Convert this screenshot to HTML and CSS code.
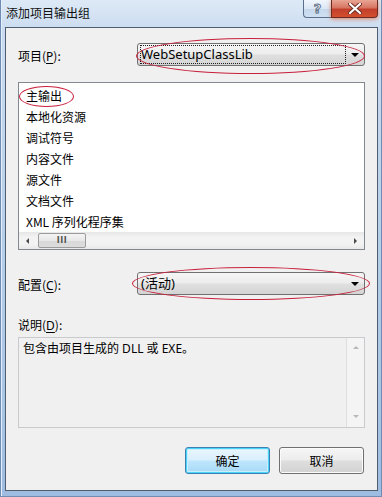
FILE: index.html
```html
<!DOCTYPE html>
<html lang="zh-CN">
<head>
<meta charset="utf-8">
<title>添加项目输出组</title>
<link rel="stylesheet" href="styles.css">
</head>
<body>
<div class="window">
  <div class="titlebar">
    <span class="title">添加项目输出组</span>
    <div class="caption-buttons">
      <div class="cap-btn help"><span class="help-glyph">?</span></div>
      <div class="cap-btn close">
        <svg width="14" height="11" viewBox="0 0 14 11"><path d="M2 1 L12 10 M12 1 L2 10" stroke="#6b2a22" stroke-width="4" stroke-linecap="round"/><path d="M2 1 L12 10 M12 1 L2 10" stroke="#ffffff" stroke-width="2.2" stroke-linecap="round"/></svg>
      </div>
    </div>
  </div>
  <div class="client">
    <div class="field-row row-project">
      <span class="field-label">项目(<u>P</u>):</span>
      <div class="combo">
        <span class="combo-text focus-rect">WebSetupClassLib</span>
        <span class="combo-arrow"></span>
        <span class="mark mark-project"></span>
      </div>
    </div>
    <div class="listbox">
      <ul class="list-items">
        <li>主输出</li>
        <li>本地化资源</li>
        <li>调试符号</li>
        <li>内容文件</li>
        <li>源文件</li>
        <li>文档文件</li>
        <li>XML 序列化程序集</li>
      </ul>
      <div class="hscroll">
        <div class="sb-btn"><span class="tri tri-left"></span></div>
        <div class="sb-track">
          <div class="sb-thumb"><span class="grip">III</span></div>
        </div>
        <div class="sb-btn"><span class="tri tri-right"></span></div>
      </div>
      <span class="mark mark-item"></span>
    </div>
    <div class="field-row row-config">
      <span class="field-label">配置(<u>C</u>):</span>
      <div class="combo">
        <span class="combo-text">(活动)</span>
        <span class="combo-arrow"></span>
        <span class="mark mark-config"></span>
      </div>
    </div>
    <div class="desc-label">说明(<u>D</u>):</div>
    <div class="desc-box">
      <div class="desc-text">包含由项目生成的 DLL 或 EXE。</div>
      <div class="vscroll">
        <span class="tri tri-up"></span>
        <span class="tri tri-down"></span>
      </div>
    </div>
    <div class="buttons">
      <button class="btn btn-default">确定</button>
      <button class="btn">取消</button>
    </div>
  </div>
</div>
</body>
</html>
```

FILE: styles.css
```css
html, body {
  margin: 0;
  padding: 0;
}

body {
  width: 382px;
  height: 497px;
  overflow: hidden;
  font-family: "Noto Sans", "Noto Sans CJK SC", sans-serif;
  font-size: 12px;
  color: #000;
}

.window {
  box-sizing: border-box;
  width: 382px;
  height: 497px;
  display: flex;
  flex-direction: column;
  padding: 0 4px 6px 5px;
  background: linear-gradient(180deg, #dde9f6 0%, #cbdcf0 6%, #b9d1ea 40%, #a9c5e5 80%, #9dbce0 100%);
  box-shadow: inset 1px 0 0 #6f8db3, inset -1px 0 0 #6f8db3, inset 0 -1px 0 #6f8db3, inset 2px 0 0 #e3eefa;
}

.titlebar {
  height: 27px;
  display: flex;
  align-items: flex-start;
  padding-left: 1px;
}

.title {
  font-family: "Noto Sans CJK SC", sans-serif;
  font-size: 12px;
  line-height: 16px;
  margin-top: 5px;
  color: #111;
}

.caption-buttons {
  margin-left: auto;
  margin-right: 0;
  display: flex;
}

.cap-btn {
  box-sizing: border-box;
  height: 18px;
  display: flex;
  align-items: center;
  justify-content: center;
  border: 1px solid #5a6f8a;
  border-top: none;
}

.help {
  width: 28px;
  border-radius: 0 0 0 4px;
  border-right: none;
  background: linear-gradient(180deg, #f1f6fc 0%, #dbe7f4 50%, #c5d7ec 51%, #cfe0f2 100%);
}

.help-glyph {
  font-family: "DejaVu Sans", sans-serif;
  font-size: 13px;
  font-weight: bold;
  line-height: 14px;
  color: #f4f7fb;
  -webkit-text-stroke: 1px #5f6f85;
}

.close {
  width: 47px;
  border-radius: 0 0 4px 0;
  border-color: #6b2a22;
  background: linear-gradient(180deg, #e9a595 0%, #d87563 45%, #c2402b 55%, #d2502e 100%);
  box-shadow: 0 1px 4px rgba(230, 90, 40, 0.7);
}

.client {
  flex: 1;
  border: 1px solid #4e5d70;
  background: #f0f0f0;
  padding: 15px 12px 0 12px;
  display: flex;
  flex-direction: column;
}

.field-row {
  display: flex;
  align-items: center;
  height: 23px;
}

.field-label {
  width: 119px;
  flex: none;
  font-family: "Noto Sans CJK SC", sans-serif;
  line-height: 16px;
  padding-top: 3px;
}

.field-label u, .desc-label u {
  font-family: "Noto Sans", sans-serif;
  text-decoration-thickness: 1px;
  text-underline-offset: 2px;
}

.combo {
  position: relative;
  box-sizing: border-box;
  width: 228px;
  height: 23px;
  border: 1px solid #707070;
  border-radius: 3px;
  background: linear-gradient(180deg, #f6f6f6 0%, #ececec 48%, #e0e0e0 52%, #d4d4d4 100%);
  display: flex;
  align-items: center;
  padding: 1px 2px 1px 2px;
}

.combo-text {
  flex: 1;
  height: 19px;
  line-height: 19px;
  padding-left: 1px;
  font-size: 13px;
  white-space: nowrap;
}

.focus-rect {
  outline: 1px dotted #202020;
  outline-offset: -1px;
  margin-right: 16px;
}

.combo-arrow {
  position: absolute;
  right: 5px;
  top: 9px;
  width: 0;
  height: 0;
  border-left: 4px solid transparent;
  border-right: 4px solid transparent;
  border-top: 4px solid #000;
}

.mark {
  position: absolute;
  box-sizing: border-box;
  border: 1px solid #c8203c;
  border-radius: 50%;
  pointer-events: none;
}

.mark-project {
  left: -2px;
  top: -6px;
  width: 229px;
  height: 36px;
}

.mark-config {
  left: -6px;
  top: -6px;
  width: 238px;
  height: 33px;
}

.mark-item {
  left: 0;
  top: 3px;
  width: 55px;
  height: 21px;
}

.listbox {
  position: relative;
  margin-top: 16px;
  box-sizing: border-box;
  height: 168px;
  border: 1px solid #828790;
  background: #fff;
  display: flex;
  flex-direction: column;
}

.list-items {
  list-style: none;
  margin: 0;
  padding: 2px 0 0 7px;
  flex: 1;
  font-family: "Noto Sans CJK SC", sans-serif;
}

.list-items li {
  height: 21px;
  line-height: 21px;
}

.hscroll {
  height: 17px;
  display: flex;
  background: linear-gradient(180deg, #e6e6e6 0%, #f3f3f3 30%, #f3f3f3 70%, #e8e8e8 100%);
}

.sb-btn {
  width: 17px;
  display: flex;
  align-items: center;
  justify-content: center;
}

.sb-track {
  flex: 1;
  display: flex;
  align-items: center;
}

.sb-thumb {
  box-sizing: border-box;
  margin-left: 2px;
  width: 48px;
  height: 15px;
  border: 1px solid #9b9b9b;
  border-radius: 2px;
  background: linear-gradient(180deg, #f4f4f4 0%, #e8e8e8 50%, #d9d9d9 51%, #dcdcdc 100%);
  display: flex;
  align-items: center;
  justify-content: center;
}

.grip {
  font-family: "DejaVu Sans", sans-serif;
  font-size: 8px;
  font-weight: bold;
  letter-spacing: 0.5px;
  color: #555;
  line-height: 8px;
}

.tri {
  width: 0;
  height: 0;
  display: block;
}

.tri-left {
  border-top: 3px solid transparent;
  border-bottom: 3px solid transparent;
  border-right: 3px solid #4a4a4a;
}

.tri-right {
  border-top: 3px solid transparent;
  border-bottom: 3px solid transparent;
  border-left: 3px solid #4a4a4a;
}

.row-config {
  margin-top: 22px;
}

.desc-label {
  margin-top: 22px;
  height: 16px;
  line-height: 16px;
  font-family: "Noto Sans CJK SC", sans-serif;
}

.desc-box {
  margin-top: 4px;
  box-sizing: border-box;
  height: 91px;
  border: 1px solid #c8cacd;
  background: #f0f0f0;
  display: flex;
}

.desc-text {
  flex: 1;
  padding: 2px 0 0 4px;
  line-height: 18px;
  font-family: "Noto Sans", "Noto Sans CJK SC", sans-serif;
}

.vscroll {
  width: 17px;
  border-left: 1px solid #dedede;
  background: #f4f4f4;
  display: flex;
  flex-direction: column;
  align-items: center;
  justify-content: space-between;
  padding: 8px 0 9px 0;
}

.tri-up {
  border-left: 3px solid transparent;
  border-right: 3px solid transparent;
  border-bottom: 3px solid #b8b8b8;
}

.tri-down {
  border-left: 3px solid transparent;
  border-right: 3px solid transparent;
  border-top: 3px solid #b8b8b8;
}

.buttons {
  margin-top: 19px;
  display: flex;
  justify-content: flex-end;
  gap: 9px;
  padding-right: 1px;
}

.btn {
  box-sizing: border-box;
  width: 85px;
  height: 27px;
  border: 1px solid #707070;
  border-radius: 3px;
  background: linear-gradient(180deg, #f6f6f6 0%, #ececec 48%, #dedede 52%, #d2d2d2 100%);
  font-family: "Noto Sans CJK SC", sans-serif;
  font-size: 12px;
  color: #000;
  padding: 0;
  box-shadow: inset 0 0 0 1px #fbfbfb;
}

.btn-default {
  border-color: #3c7fb1;
  background: linear-gradient(180deg, #eaf6fd 0%, #d9effc 48%, #bee6fd 52%, #a7d9f5 100%);
  box-shadow: inset 0 0 0 1px #48d4fb, inset 0 0 0 2px #c9eefc;
}
```
